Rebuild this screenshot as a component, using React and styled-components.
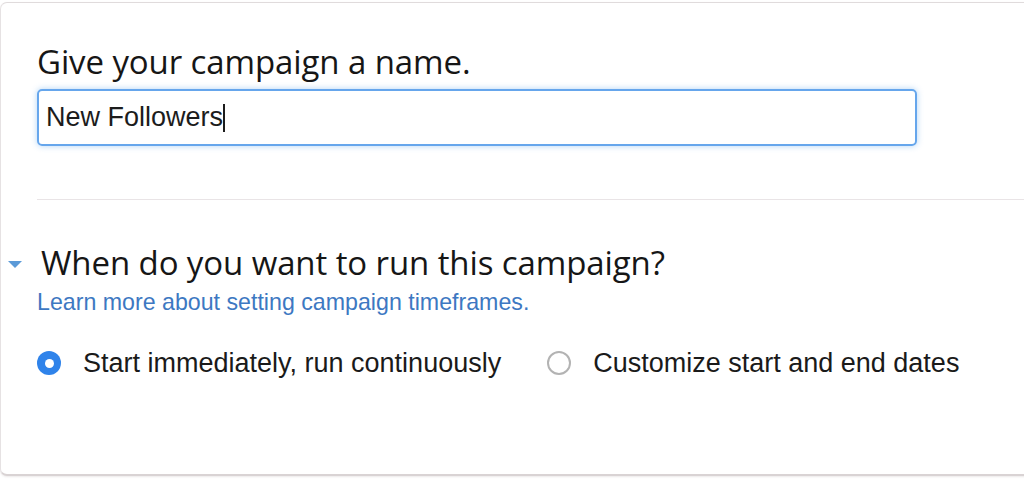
import React, { useState } from 'react';
import styled, { createGlobalStyle } from 'styled-components';

const GlobalStyle = createGlobalStyle`
    html, body {
        margin: 0;
        padding: 0;
        background: #ffffff;
        overflow: hidden;
    }
    * {
        box-sizing: border-box;
    }
`

const Page = styled.div`
    padding-top: 2px;
    width: 1024px;
    height: 482px;
`

const Card = styled.div`
    width: 1060px;
    background: #ffffff;
    border: 1px solid #e6e2e3;
    border-top-color: #e0dbdc;
    border-bottom: 2px solid #d9d3d4;
    border-radius: 7px;
    box-shadow: 0 1px 2px rgba(120, 100, 100, 0.14);
    padding: 41px 0 95px 0;
`

const Section = styled.div`
    padding-left: 36px;
`

const Heading = styled.h2`
    margin: 0;
    font-family: "Open Sans", "Noto Sans", sans-serif;
    font-weight: 400;
    font-size: 33px;
    line-height: 36px;
    color: #161616;
    letter-spacing: -0.1px;
`

const NameField = styled.div`
    margin-top: 9px;
    width: 880px;
    height: 57px;
    display: flex;
    align-items: center;
    padding-left: 7px;
    border: 2px solid #66a6ec;
    border-radius: 5px;
    box-shadow: 0 0 6px rgba(82, 160, 236, 0.45);
    font-family: "Liberation Sans", Arial, sans-serif;
    font-size: 27px;
    color: #1c1c1c;
`

const Caret = styled.span`
    display: inline-block;
    width: 1.5px;
    height: 28px;
    background: #1c1c1c;
`

const Divider = styled.hr`
    margin: 53px 0 45px 36px;
    border: none;
    border-top: 1px solid #e9e4e6;
`

const SectionHeader = styled.div`
    display: flex;
    align-items: center;
    gap: 19px;
    margin-left: -29px;
    cursor: pointer;
`

const Toggle = styled.span`
    width: 0;
    height: 0;
    border-left: 7.5px solid transparent;
    border-right: 7.5px solid transparent;
    border-top: 7px solid #5b9ad8;
    margin-top: 2px;
`

const HelpLink = styled.a`
    display: block;
    margin-top: 7px;
    font-family: "Liberation Sans", Arial, sans-serif;
    font-size: 23.2px;
    line-height: 28px;
    color: #3d78c2;
    text-decoration: none;
`

const RadioGroup = styled.div`
    display: flex;
    align-items: center;
    gap: 46px;
    margin-top: 31px;
`

const RadioOption = styled.label`
    display: flex;
    align-items: center;
    gap: 22px;
    font-family: "Liberation Sans", Arial, sans-serif;
    font-size: 27px;
    line-height: 32px;
    color: #1a1a1a;
    cursor: pointer;
`

const RadioDot = styled.span`
    width: 24px;
    height: 24px;
    border-radius: 50%;
    flex-shrink: 0;
    background: ${p => (p.checked ? '#2f83ea' : '#ffffff')};
    border: ${p => (p.checked ? 'none' : '2px solid #b3b3b3')};
    display: flex;
    align-items: center;
    justify-content: center;

    &::after {
        content: '';
        display: ${p => (p.checked ? 'block' : 'none')};
        width: 9px;
        height: 9px;
        border-radius: 50%;
        background: #ffffff;
    }
`

const options = [
    { id: 'now', label: 'Start immediately, run continuously' },
    { id: 'custom', label: 'Customize start and end dates' },
]

function App() {
    const [timeframe, setTimeframe] = useState('now')

    return (
        <Page>
            <GlobalStyle />
            <Card>
                <Section>
                    <Heading>Give your campaign a name.</Heading>
                    <NameField>
                        New Followers<Caret />
                    </NameField>
                </Section>
                <Divider />
                <Section>
                    <SectionHeader>
                        <Toggle />
                        <Heading>When do you want to run this campaign?</Heading>
                    </SectionHeader>
                    <HelpLink href="#">Learn more about setting campaign timeframes.</HelpLink>
                    <RadioGroup>
                        {options.map(o => (
                            <RadioOption key={o.id} onClick={() => setTimeframe(o.id)}>
                                <RadioDot checked={timeframe === o.id} />
                                {o.label}
                            </RadioOption>
                        ))}
                    </RadioGroup>
                </Section>
            </Card>
        </Page>
    )
}

export default App;
